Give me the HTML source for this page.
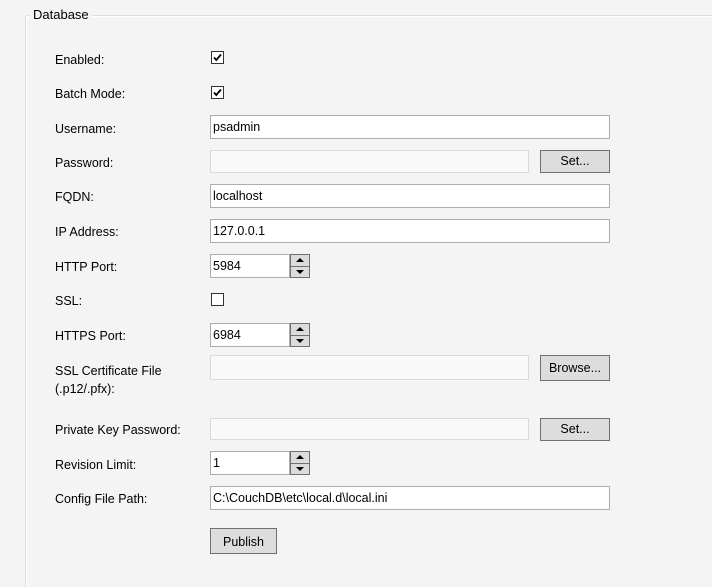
<!DOCTYPE html>
<html><head><style>
html,body{margin:0;width:712px;height:587px;overflow:hidden}
body{background:#f4f4f4;position:relative;font-family:"Segoe UI","Liberation Sans",sans-serif;font-size:12.5px;color:#000}
.vl{position:absolute;left:25px;top:15px;width:1px;height:572px;background:#d5dfe5;border-right:1px solid #fff}
.hl{position:absolute;left:25px;top:15px;width:687px;height:1px;background:#d5dfe5;border-bottom:1px solid #fff}
.lg{position:absolute;left:30px;top:7px;background:#f4f4f4;padding:0 3px;font-size:13px}
.lb{position:absolute;left:55px;font-size:12.5px;line-height:18px;margin-top:1px}
.in{position:absolute;box-sizing:border-box;background:#fff;border:1px solid #abadb3;padding:2px 0 0 2px;line-height:19px;font-size:12.5px}
.dis{background:#f9f9f9;border-color:#d9d9d9}
.btn{position:absolute;box-sizing:border-box;background:#dddddd;border:1px solid #707070;text-align:center;line-height:21px;font-size:12.5px}
.cb{position:absolute;left:211px;width:13px;height:13px;box-sizing:border-box;border:1px solid #333;background:#fff}
.sp{position:absolute;left:290px;width:20px;box-sizing:border-box}
.sp div{box-sizing:border-box;height:13px;background:#dcdcdc;border:1px solid #707070;position:relative}
.sp div+div{height:12px;margin-top:-1px}
.up:after{content:"";position:absolute;left:5px;top:3px;border-left:4px solid transparent;border-right:4px solid transparent;border-bottom:4px solid #000}
.dn:after{content:"";position:absolute;left:5px;top:3px;border-left:4px solid transparent;border-right:4px solid transparent;border-top:4px solid #000}
</style></head><body>
<div class="hl"></div><div class="vl"></div>
<div class="lg">Database</div>

<div class="lb" style="top:50px">Enabled:</div>
<div class="cb" style="top:51px"><svg width="11" height="11" viewBox="0 0 11 11" style="position:absolute;left:0;top:0"><path d="M2 5.5 L4.3 8 L9 2.5" stroke="#000" stroke-width="1.8" fill="none"/></svg></div>
<div class="lb" style="top:84px">Batch Mode:</div>
<div class="cb" style="top:86px"><svg width="11" height="11" viewBox="0 0 11 11" style="position:absolute;left:0;top:0"><path d="M2 5.5 L4.3 8 L9 2.5" stroke="#000" stroke-width="1.8" fill="none"/></svg></div>

<div class="lb" style="top:119px">Username:</div>
<div class="in" style="left:210px;top:115px;width:400px;height:24px">psadmin</div>

<div class="lb" style="top:153px">Password:</div>
<div class="in dis" style="left:210px;top:150px;width:319px;height:23px"></div>
<div class="btn" style="left:540px;top:150px;width:70px;height:23px">Set...</div>

<div class="lb" style="top:187px">FQDN:</div>
<div class="in" style="left:210px;top:184px;width:400px;height:24px">localhost</div>

<div class="lb" style="top:222px">IP Address:</div>
<div class="in" style="left:210px;top:219px;width:400px;height:24px">127.0.0.1</div>

<div class="lb" style="top:257px">HTTP Port:</div>
<div class="in" style="left:210px;top:254px;width:80px;height:24px">5984</div>
<div class="sp" style="top:254px"><div class="up"></div><div class="dn"></div></div>

<div class="lb" style="top:291px">SSL:</div>
<div class="cb" style="top:293px"></div>

<div class="lb" style="top:326px">HTTPS Port:</div>
<div class="in" style="left:210px;top:323px;width:80px;height:24px">6984</div>
<div class="sp" style="top:323px"><div class="up"></div><div class="dn"></div></div>

<div class="lb" style="top:361px">SSL Certificate File<br>(.p12/.pfx):</div>
<div class="in dis" style="left:210px;top:355px;width:319px;height:25px"></div>
<div class="btn" style="left:540px;top:355px;width:70px;height:26px;line-height:25px">Browse...</div>

<div class="lb" style="top:420px">Private Key Password:</div>
<div class="in dis" style="left:210px;top:418px;width:319px;height:22px"></div>
<div class="btn" style="left:540px;top:418px;width:70px;height:23px">Set...</div>

<div class="lb" style="top:455px">Revision Limit:</div>
<div class="in" style="left:210px;top:451px;width:80px;height:24px">1</div>
<div class="sp" style="top:451px"><div class="up"></div><div class="dn"></div></div>

<div class="lb" style="top:489px">Config File Path:</div>
<div class="in" style="left:210px;top:486px;width:400px;height:24px">C:\CouchDB\etc\local.d\local.ini</div>

<div class="btn" style="left:210px;top:528px;width:67px;height:26px;line-height:26px">Publish</div>
</body></html>
